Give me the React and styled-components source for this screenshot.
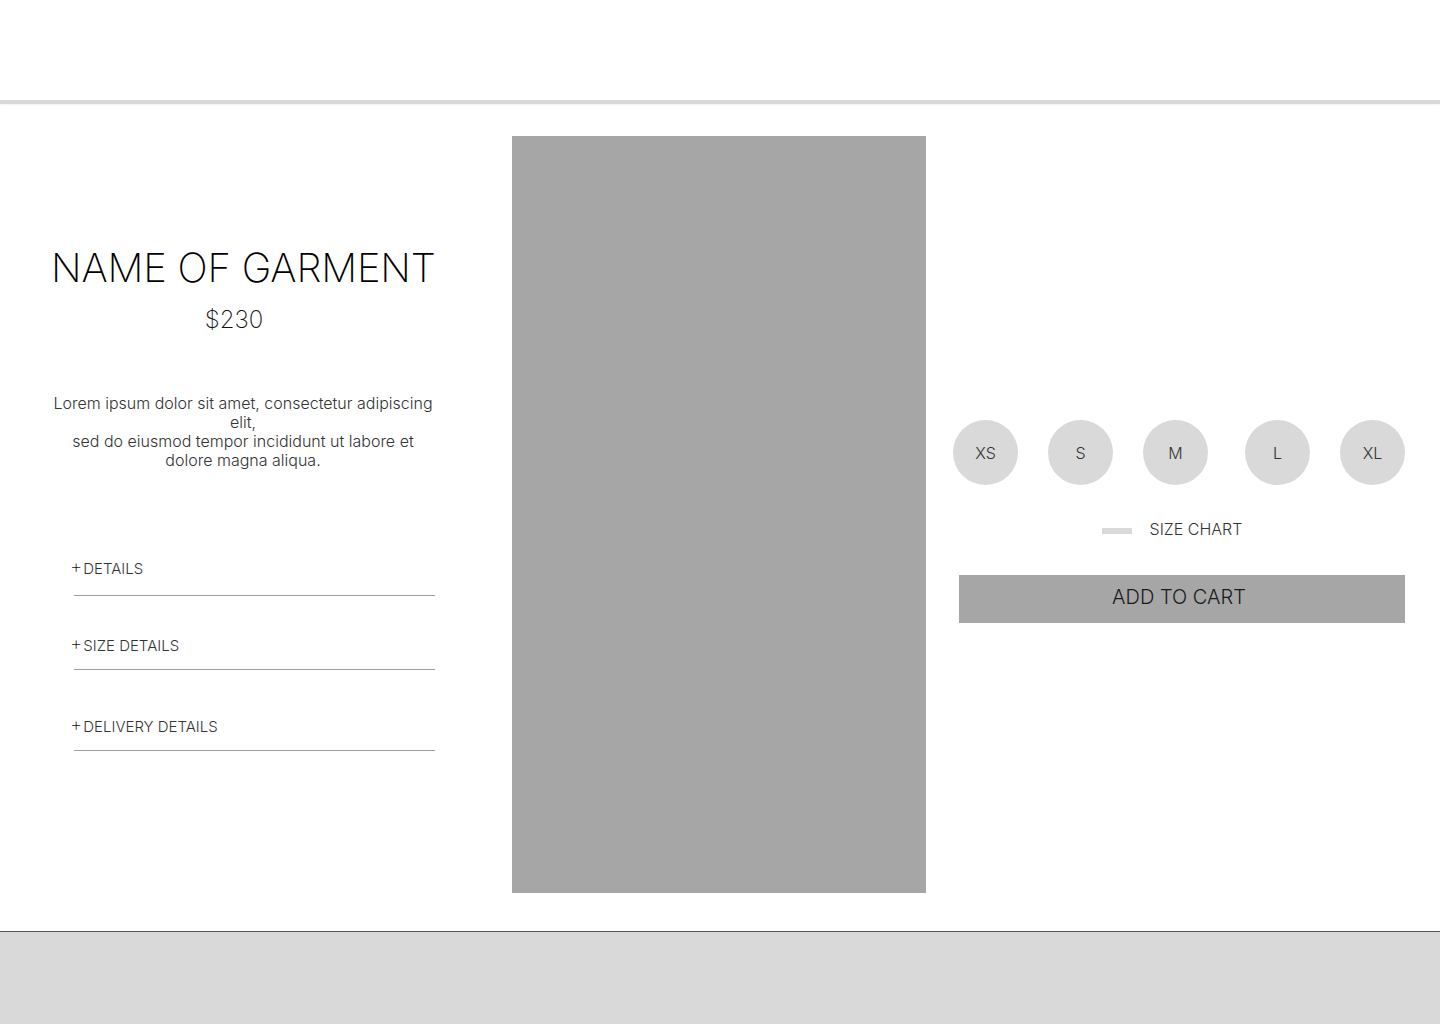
import React from "react";
import styled, { createGlobalStyle } from "styled-components";

const Global = createGlobalStyle`
  html, body { margin: 0; padding: 0; background: #ffffff; }
  body { font-family: Inter, "Noto Sans", sans-serif; color: #1e1e1e; }
  * { box-sizing: border-box; }
`;

const Page = styled.div`
  width: 1440px;
  min-height: 1024px;
  display: flex;
  flex-direction: column;
`;

const Header = styled.header`
  height: 104px;
  background: #ffffff;
  border-bottom: 4px solid #d9d9d9;
  box-shadow: 0 1px 2px rgba(0, 0, 0, 0.06), 0 -1px 2px rgba(0, 0, 0, 0.04);
`;

const Main = styled.main`
  display: flex;
  align-items: flex-start;
  padding: 32px 0 38px;
`;

const LeftColumn = styled.section`
  width: 512px;
  padding: 108px 77px 0 51px;
  display: flex;
  flex-direction: column;
`;

const Title = styled.h1`
  margin: 0;
  font-size: 40px;
  line-height: 48px;
  font-weight: 200;
  text-align: center;
  letter-spacing: -0.2px;
  color: #000;
  white-space: nowrap;
`;

const Price = styled.div`
  margin-top: 13px;
  padding-right: 18px;
  font-size: 24px;
  line-height: 29px;
  font-weight: 200;
  text-align: center;
  color: #111;
`;

const Description = styled.p`
  margin: 60px 0 0;
  font-size: 16px;
  line-height: 19px;
  font-weight: 300;
  text-align: center;
  color: #333;
`;

const Accordion = styled.div`
  margin-top: 90px;
  margin-left: 19px;
  display: flex;
  flex-direction: column;
`;

const AccordionItem = styled.div`
  margin-top: ${(p) => p.$top}px;
  display: flex;
  flex-direction: column;
`;

const AccordionHeader = styled.div`
  display: flex;
  align-items: center;
  height: 18px;
  font-size: 15px;
  line-height: 18px;
  font-weight: 300;
  color: #333;
`;

const Plus = styled.span`
  font-size: 19px;
  line-height: 18px;
  font-weight: 200;
  color: #111;
  margin-right: 1px;
  transform: translateY(-2px);
`;

const Divider = styled.div`
  margin-top: ${(p) => p.$gap}px;
  margin-left: 4px;
  height: 1px;
  background: #9e9e9e;
`;

const ImageBox = styled.div`
  width: 414px;
  height: 757px;
  background: #a6a6a6;
  flex-shrink: 0;
`;

const RightColumn = styled.section`
  width: 452px;
  margin-left: 27px;
  padding-top: 284px;
  display: flex;
  flex-direction: column;
`;

const SizeRow = styled.div`
  display: flex;
  gap: 30px;
`;

const SizeCircle = styled.button`
  width: 65px;
  height: 65px;
  margin-left: ${(p) => p.$shift || 0}px;
  border-radius: 50%;
  border: none;
  background: #d9d9d9;
  padding: 0;
  font-family: Inter, "Noto Sans", sans-serif;
  font-size: 16px;
  font-weight: 300;
  color: #333;
  display: flex;
  align-items: center;
  justify-content: center;
`;

const SizeChartRow = styled.div`
  margin-top: 35px;
  padding-right: 14px;
  display: flex;
  align-items: center;
  justify-content: center;
  gap: 18px;
  height: 19px;
`;

const ChartBar = styled.span`
  width: 30px;
  height: 6px;
  background: #d9d9d9;
  margin-top: 2px;
`;

const ChartLabel = styled.span`
  font-size: 16px;
  line-height: 19px;
  font-weight: 300;
  color: #333;
`;

const CartButton = styled.button`
  margin-top: 36px;
  margin-left: 6px;
  height: 48px;
  border: none;
  background: #a6a6a6;
  font-family: Inter, "Noto Sans", sans-serif;
  font-size: 20px;
  font-weight: 300;
  color: #1a1a1a;
  padding: 0 6px 4px 0;
  display: flex;
  align-items: center;
  justify-content: center;
`;

const Footer = styled.footer`
  height: 93px;
  border-top: 1px solid #555555;
  background: #d9d9d9;
`;

const details = [
  { label: "DETAILS", top: 0, gap: 17 },
  { label: "SIZE DETAILS", top: 41, gap: 14 },
  { label: "DELIVERY DETAILS", top: 48, gap: 14 },
];

const sizes = [
  { label: "XS", shift: 0 },
  { label: "S", shift: 0 },
  { label: "M", shift: 0 },
  { label: "L", shift: 7 },
  { label: "XL", shift: 0 },
];

export default function App() {
  return (
    <>
      <Global />
      <Page>
        <Header />
        <Main>
          <LeftColumn>
            <Title>NAME OF GARMENT</Title>
            <Price>$230</Price>
            <Description>
              Lorem ipsum dolor sit amet, consectetur adipiscing elit,
              <br />
              sed do eiusmod tempor incididunt ut labore et dolore magna aliqua.
            </Description>
            <Accordion>
              {details.map((d) => (
                <AccordionItem key={d.label} $top={d.top}>
                  <AccordionHeader>
                    <Plus>+</Plus>
                    {d.label}
                  </AccordionHeader>
                  <Divider $gap={d.gap} />
                </AccordionItem>
              ))}
            </Accordion>
          </LeftColumn>
          <ImageBox />
          <RightColumn>
            <SizeRow>
              {sizes.map((s) => (
                <SizeCircle key={s.label} $shift={s.shift}>
                  {s.label}
                </SizeCircle>
              ))}
            </SizeRow>
            <SizeChartRow>
              <ChartBar />
              <ChartLabel>SIZE CHART</ChartLabel>
            </SizeChartRow>
            <CartButton>ADD TO CART</CartButton>
          </RightColumn>
        </Main>
        <Footer />
      </Page>
    </>
  );
}
